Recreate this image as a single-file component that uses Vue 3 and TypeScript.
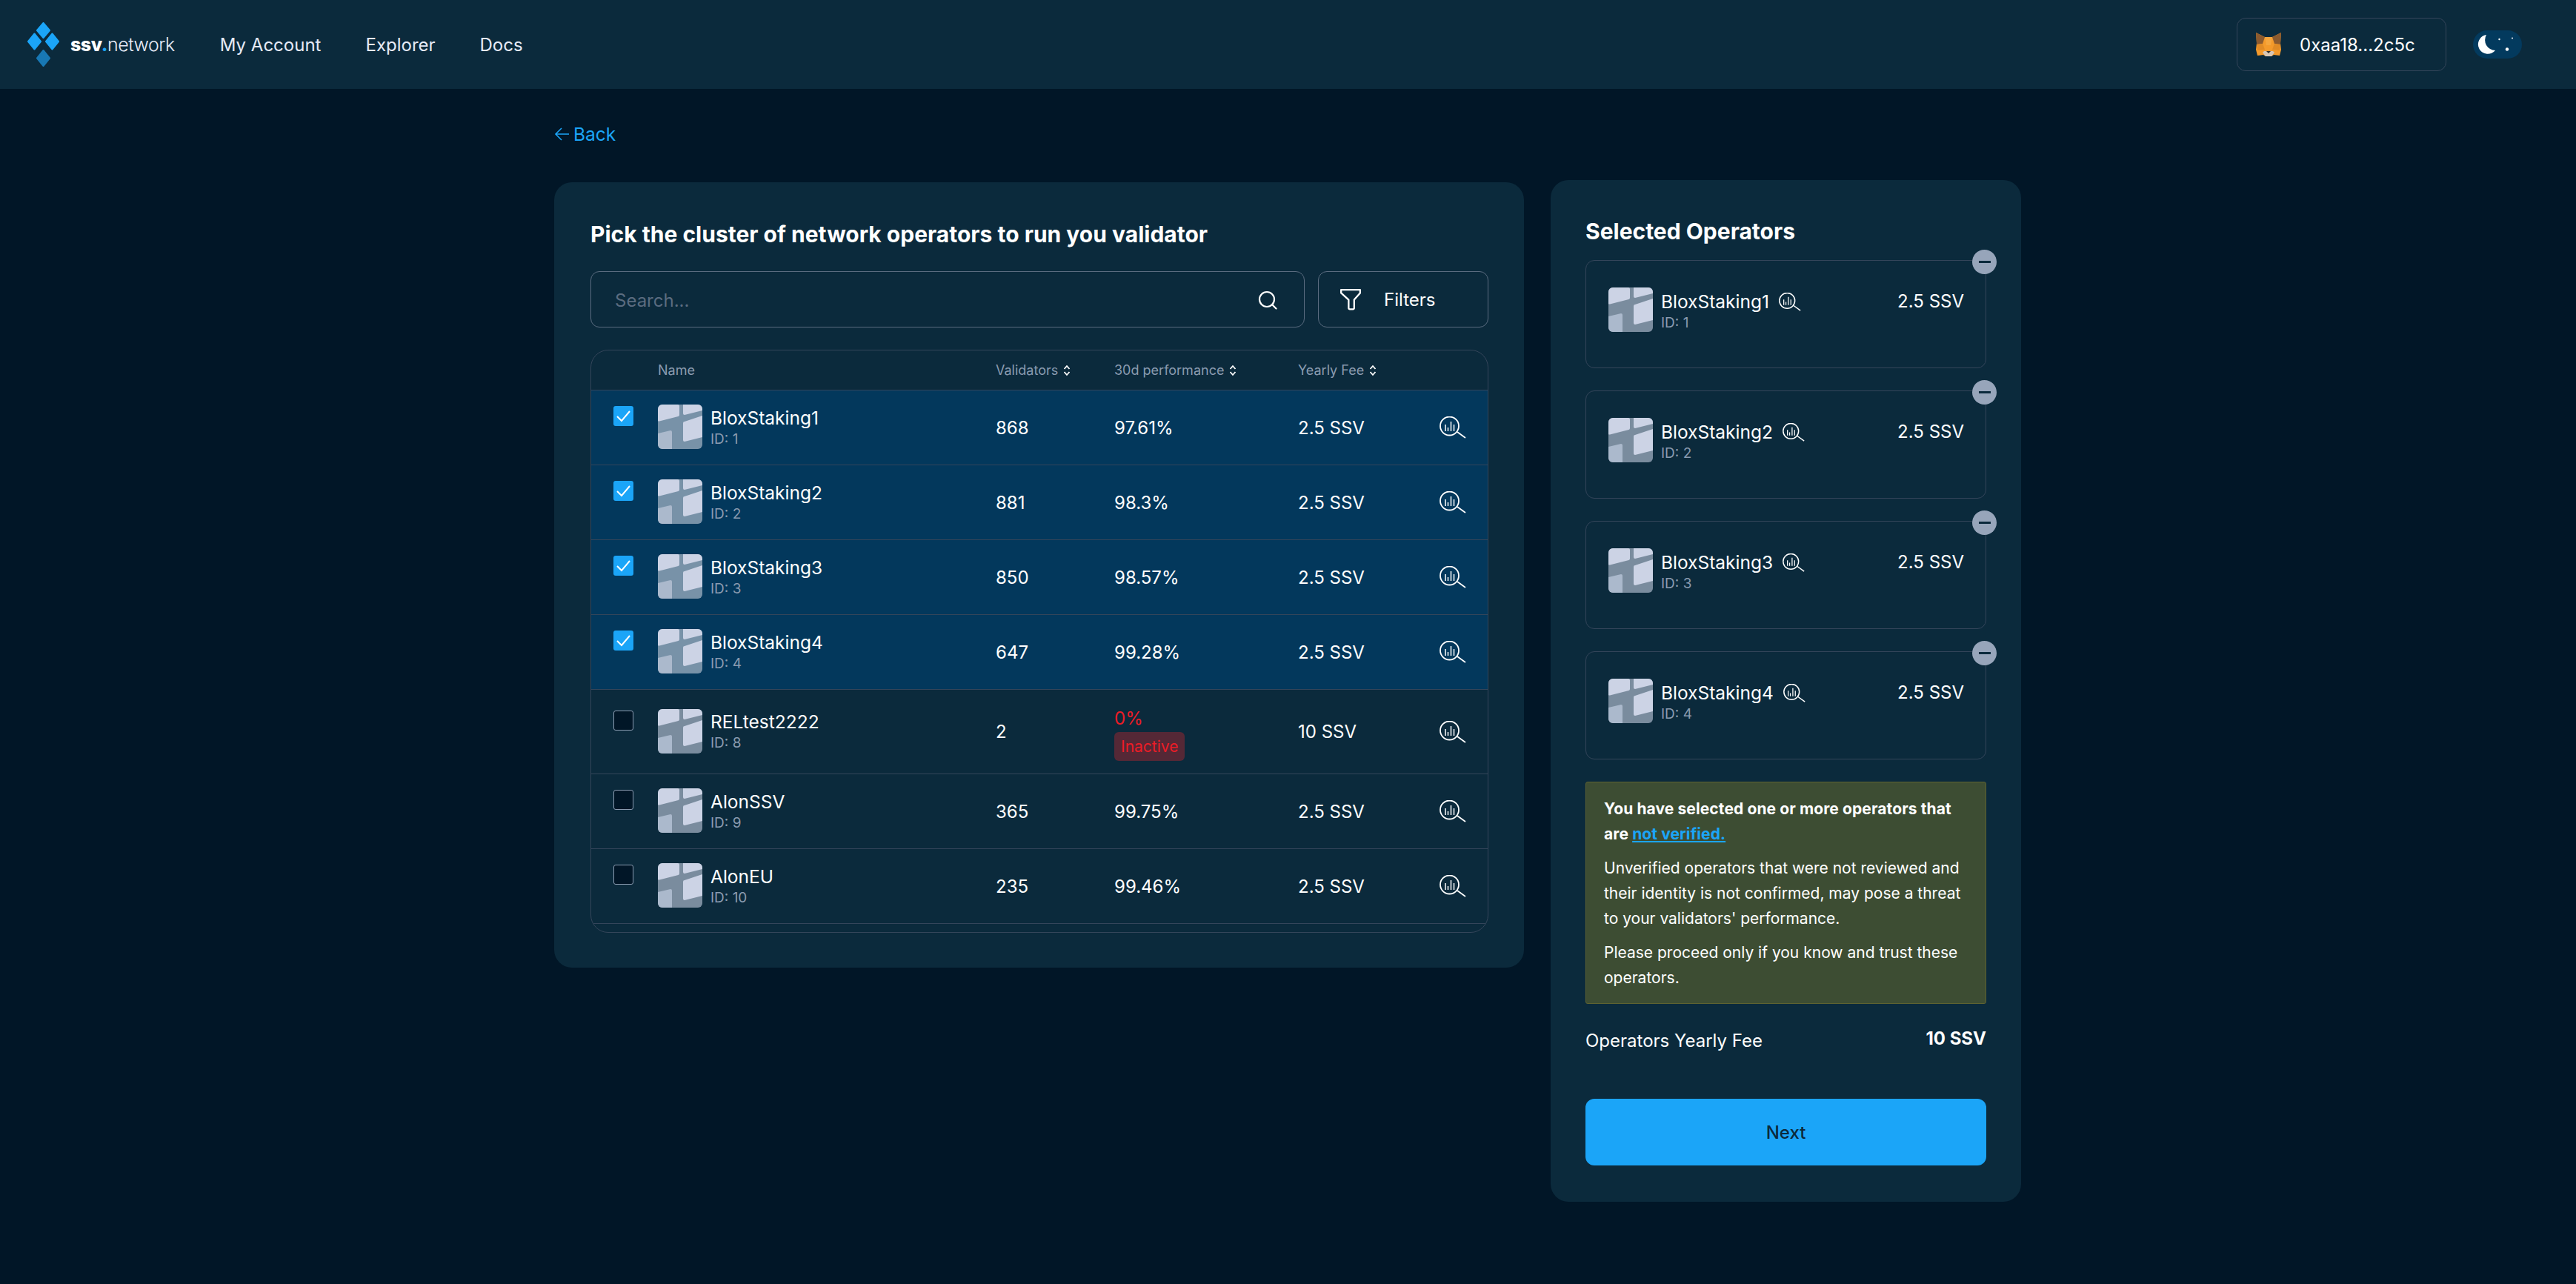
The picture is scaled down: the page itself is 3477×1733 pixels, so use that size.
<script setup lang="ts">
type Operator = {
  name: string;
  id: number;
  validators: number;
  performance: string;
  fee: string;
  selected: boolean;
  inactive?: boolean;
};

const operators: Operator[] = [
  { name: "BloxStaking1", id: 1, validators: 868, performance: "97.61%", fee: "2.5 SSV", selected: true },
  { name: "BloxStaking2", id: 2, validators: 881, performance: "98.3%", fee: "2.5 SSV", selected: true },
  { name: "BloxStaking3", id: 3, validators: 850, performance: "98.57%", fee: "2.5 SSV", selected: true },
  { name: "BloxStaking4", id: 4, validators: 647, performance: "99.28%", fee: "2.5 SSV", selected: true },
  { name: "RELtest2222", id: 8, validators: 2, performance: "0%", fee: "10 SSV", selected: false, inactive: true },
  { name: "AlonSSV", id: 9, validators: 365, performance: "99.75%", fee: "2.5 SSV", selected: false },
  { name: "AlonEU", id: 10, validators: 235, performance: "99.46%", fee: "2.5 SSV", selected: false },
];

const selected = operators.filter((op) => op.selected);
const sortColumns = ["Validators", "30d performance", "Yearly Fee"];

// shared window-shaped operator avatar
const lightPanes = [
  "M6 0H27a2 2 0 0 1 2 2V14a2 2 0 0 1-1.500 2L2 22.500a2 2 0 0 1-2-.5V6a6 6 0 0 1 6-6z",
  "M34 0H54a6 6 0 0 1 6 6v2L36 14a2 2 0 0 1-2-2z",
  "M36 23L60 15V44L36 50a2 2 0 0 1-2-2V25a2 2 0 0 1 2-2z",
];
const dimPane = "M0 39L17 35a2 2 0 0 1 2 2V60H6a6 6 0 0 1-6-6z";

const diamonds = [
  { d: "M21.500 1l8.500 10-8.500 10-8.500-10z", fill: "#1ba5f8" },
  { d: "M9.500 15.500L18 26l-8.500 10.500L1 26z", fill: "#1ba5f8" },
  { d: "M33.500 15.500L42 26l-8.500 10.500L25 26z", fill: "#1ba5f8" },
  { d: "M21.500 38L30 48.500 21.500 59 13 48.500z", fill: "#1878b4" },
];
</script>

<template>
  <div class="page">
    <header class="header">
      <div class="brand">
        <svg class="brand__mark" viewBox="0 0 43 60" aria-hidden="true">
          <path
            v-for="item in diamonds"
            :key="item.d"
            :d="item.d"
            :fill="item.fill"
            :stroke="item.fill"
            stroke-width="2"
            stroke-linejoin="round"
          />
        </svg>
        <span class="brand__name"><b>ssv</b><i>.</i>network</span>
      </div>
      <nav class="nav">
        <a>My Account</a>
        <a>Explorer</a>
        <a>Docs</a>
      </nav>
      <div class="wallet">
        <svg class="wallet__fox" viewBox="0 0 34 32" aria-hidden="true">
          <path d="M0 0l12 6h10L34 0l-1 14 1 9-2 8-8-1-3 2h-8l-3-2-8 1-2-8 1-9z" fill="#f49a2b" />
          <path d="M0 0l12 6-3 9-8 1zM34 0L22 6l3 9 8 1z" fill="#8b5a2f" />
          <path d="M12 6h10l-2 11h-6z" fill="#f6a63d" />
          <path d="M1 16l8-1 3 8-10 1zM33 16l-8-1-3 8 10 1z" fill="#e08a25" />
          <path d="M11 25h12l2 2-4 5h-8l-4-5z" fill="#d8c7b5" />
          <path d="M14 25h6l-3 3z" fill="#2c2c2c" />
        </svg>
        <span>0xaa18...2c5c</span>
      </div>
      <div class="toggle">
        <svg viewBox="0 0 66 38" aria-hidden="true">
          <path d="M18 6a13 13 0 1 0 12 21 14 14 0 0 1-12-21z" fill="#fff" />
          <circle cx="35.500" cy="12" r="1.200" fill="#fff" />
          <circle cx="53" cy="10.500" r="1" fill="#fff" />
          <circle cx="46" cy="25.500" r="2.200" fill="#fff" />
        </svg>
      </div>
    </header>

    <main class="main">
      <a class="back">
        <svg viewBox="0 0 22 22" aria-hidden="true">
          <path d="M20 11H2M10 3l-8 8 8 8" fill="none" stroke="currentColor" stroke-width="1.600" />
        </svg>
        Back
      </a>

      <div class="columns">
        <section class="card card--picker">
          <h1 class="card__title">Pick the cluster of network operators to run you validator</h1>
          <div class="tools">
            <div class="search">
              <span>Search...</span>
              <svg viewBox="0 0 26 26" aria-hidden="true">
                <circle cx="12" cy="12" r="10" fill="none" stroke="#fff" stroke-width="2.200" />
                <path d="M19 19l5.500 5.500" stroke="#fff" stroke-width="2.200" stroke-linecap="round" />
              </svg>
            </div>
            <div class="filters">
              <svg viewBox="0 0 28 28" aria-hidden="true">
                <path
                  d="M2 2h24v4L18.500 14.500V25a1.500 1.500 0 0 1-1.500 1.500h-4a1.500 1.500 0 0 1-1.500-1.500V14.500L2 6z"
                  fill="none"
                  stroke="#fff"
                  stroke-width="2.200"
                  stroke-linejoin="round"
                />
              </svg>
              <span>Filters</span>
            </div>
          </div>

          <div class="table">
            <div class="row row--head">
              <span />
              <span>Name</span>
              <span v-for="col in sortColumns" :key="col" class="sort">
                {{ col }}
                <svg viewBox="0 0 10 16" aria-hidden="true">
                  <path d="M1.500 6L5 2l3.500 4M1.500 10L5 14l3.500-4" fill="none" stroke="#fff" stroke-width="1.800" />
                </svg>
              </span>
              <span />
            </div>

            <div
              v-for="op in operators"
              :key="op.id"
              class="row"
              :class="{ 'row--selected': op.selected, 'row--tall': op.inactive }"
            >
              <span class="check" :class="{ 'check--on': op.selected }">
                <svg v-if="op.selected" viewBox="0 0 27 27" aria-hidden="true">
                  <path d="M5 14l6 6 11-13" fill="none" stroke="#fff" stroke-width="2" />
                </svg>
              </span>
              <div class="operator">
                <svg class="avatar" viewBox="0 0 60 60" aria-hidden="true">
                  <rect class="avatar__bg" width="60" height="60" rx="6" />
                  <path v-for="d in lightPanes" :key="d" :d="d" fill="#ccd3e5" />
                  <path :d="dimPane" fill="#abb9cc" />
                </svg>
                <div>
                  <div class="operator__name">{{ op.name }}</div>
                  <div class="operator__id">ID: {{ op.id }}</div>
                </div>
              </div>
              <span>{{ op.validators }}</span>
              <div v-if="op.inactive" class="perf-off">
                <span>{{ op.performance }}</span>
                <span class="badge">Inactive</span>
              </div>
              <span v-else>{{ op.performance }}</span>
              <span>{{ op.fee }}</span>
              <svg class="lens" viewBox="0 0 36 30" aria-hidden="true">
                <circle cx="13.500" cy="13" r="12.500" fill="none" stroke="#fff" stroke-width="1.800" />
                <path d="M24 21l11 8" stroke="#fff" stroke-width="1.800" />
                <path d="M8 20v-9M11.500 20v-5M15.500 20V7M19.500 20v-9" stroke="#fff" stroke-width="1.500" />
              </svg>
            </div>
            <div class="table__foot" />
          </div>
        </section>

        <aside class="card card--side">
          <h2 class="card__title">Selected Operators</h2>
          <div class="picks">
            <div v-for="op in selected" :key="op.id" class="pick">
              <svg class="avatar" viewBox="0 0 60 60" aria-hidden="true">
                <rect class="avatar__bg" width="60" height="60" rx="6" />
                <path v-for="d in lightPanes" :key="d" :d="d" fill="#ccd3e5" />
                <path :d="dimPane" fill="#abb9cc" />
              </svg>
              <div class="pick__text">
                <div class="pick__name">
                  {{ op.name }}
                  <svg class="lens lens--small" viewBox="0 0 36 30" aria-hidden="true">
                    <circle cx="13.500" cy="13" r="12.500" fill="none" stroke="#fff" stroke-width="1.800" />
                    <path d="M24 21l11 8" stroke="#fff" stroke-width="1.800" />
                    <path d="M8 20v-9M11.500 20v-5M15.500 20V7M19.500 20v-9" stroke="#fff" stroke-width="1.500" />
                  </svg>
                </div>
                <div class="operator__id">ID: {{ op.id }}</div>
              </div>
              <span class="pick__fee">{{ op.fee }}</span>
              <span class="pick__remove"><i /></span>
            </div>
          </div>

          <div class="warning">
            <p class="warning__lead">
              You have selected one or more operators that are <a>not verified.</a>
            </p>
            <p>Unverified operators that were not reviewed and their identity is not confirmed, may pose a threat to your validators' performance.</p>
            <p>Please proceed only if you know and trust these operators.</p>
          </div>

          <div class="total">
            <span class="total__label">Operators Yearly Fee</span>
            <b>10 SSV</b>
          </div>

          <button class="next" type="button">Next</button>
        </aside>
      </div>
    </main>
  </div>
</template>

<style>
html,
body {
  margin: 0;
  background: #011627;
}
</style>

<style scoped>
.page {
  min-height: 1733px;
  background: #011627;
  color: #fff;
  font-family: Inter, "Noto Sans", sans-serif;
}

.header {
  height: 120px;
  box-sizing: border-box;
  display: flex;
  align-items: center;
  padding: 0 73px 0 37px;
  background: #0b2a3c;
}

.brand {
  display: flex;
  align-items: center;
  gap: 15px;
}

.brand__mark {
  width: 43px;
  height: 60px;
}

.brand__name {
  font-size: 25px;
  font-weight: 300;
  letter-spacing: -0.5px;
  color: #e6eaf7;
}

.brand__name b {
  font-weight: 800;
  color: #fff;
}

.brand__name i {
  font-style: normal;
  font-weight: 800;
  color: #1ba5f8;
}

.nav {
  display: flex;
  gap: 60px;
  margin-left: 61px;
  font-size: 24px;
  color: #e6eaf7;
}

.wallet {
  margin-left: auto;
  width: 283px;
  height: 72px;
  box-sizing: border-box;
  display: flex;
  align-items: center;
  gap: 25px;
  padding-left: 25px;
  border: 1px solid #34455a;
  border-radius: 12px;
  font-size: 24px;
}

.wallet__fox {
  width: 34px;
  height: 32px;
}

.toggle {
  width: 66px;
  height: 38px;
  margin-left: 36px;
  border-radius: 19px;
  background: #033a5e;
}

.toggle svg {
  display: block;
  width: 66px;
  height: 38px;
}

.main {
  width: 1980px;
  margin-left: 748px;
}

.back {
  display: flex;
  align-items: center;
  gap: 4px;
  height: 30px;
  margin-top: 46px;
  font-size: 24.500px;
  color: #1ba5f8;
}

.back svg {
  width: 22px;
  height: 22px;
}

.columns {
  display: flex;
  align-items: flex-start;
  gap: 36px;
  margin-top: 47px;
}

.card {
  box-sizing: border-box;
  background: #0b2a3c;
  border-radius: 24px;
}

.card__title {
  margin: 0;
  font-size: 30px;
  line-height: 40px;
  font-weight: 700;
}

.card--picker {
  width: 1309px;
  margin-top: 3px;
  padding: 50px 48px 47px 49px;
}

.tools {
  display: flex;
  gap: 18px;
  margin-top: 30px;
}

.search,
.filters {
  box-sizing: border-box;
  height: 76px;
  display: flex;
  align-items: center;
  border: 1px solid #5b6c80;
  border-radius: 12px;
}

.search {
  flex: 1;
  justify-content: space-between;
  padding: 2px 36px 0 32px;
  font-size: 24px;
  color: #5b6c80;
}

.search svg {
  width: 26px;
  height: 26px;
}

.filters {
  width: 230px;
  gap: 30px;
  padding-left: 28px;
  font-size: 24px;
}

.filters svg {
  width: 30px;
  height: 30px;
}

.table {
  margin-top: 30px;
  border: 1px solid #34455a;
  border-radius: 24px;
  overflow: hidden;
  font-size: 24px;
}

.row {
  display: grid;
  grid-template-columns: 90px 456px 160px 248px 191px 1fr;
  align-items: center;
  height: 101px;
  box-sizing: border-box;
  border-bottom: 1px solid #34455a;
}

.row--head {
  height: 54px;
  font-size: 18px;
  color: #8a9bb0;
}

.row--selected {
  background: #03385c;
}

.row--tall {
  height: 114px;
}

.sort {
  display: flex;
  align-items: center;
  gap: 7px;
}

.sort svg {
  width: 10px;
  height: 16px;
}

.check {
  box-sizing: border-box;
  width: 27px;
  height: 27px;
  margin: 0 0 31px 30px;
  border: 1px solid #8a9bb0;
  border-radius: 3px;
  background: #011627;
}

.check--on {
  border: 0;
  background: #1ba5f8;
}

.check svg {
  display: block;
}

.operator {
  display: flex;
  align-items: center;
  gap: 11px;
  padding-bottom: 2px;
}

.avatar {
  flex: none;
  width: 60px;
  height: 60px;
}

.avatar__bg {
  fill: #7a8c9e;
}

.row--selected .avatar__bg {
  fill: #7892a8;
}

.operator__name {
  font-size: 24.500px;
  line-height: 32px;
  margin-top: 1px;
}

.operator__id {
  font-size: 19px;
  line-height: 26px;
  color: #8a9bb0;
}

.perf-off {
  display: flex;
  flex-direction: column;
  align-items: flex-start;
  gap: 4px;
  margin-top: 6px;
  line-height: 29px;
  color: #ec1c26;
}

.badge {
  padding: 0 9px;
  height: 39px;
  line-height: 39px;
  border-radius: 6px;
  background: #552836;
  font-size: 21px;
}

.lens {
  width: 36px;
  height: 30px;
}

.lens--small {
  width: 30px;
  height: 25px;
  margin-left: 13px;
}

.table__foot {
  height: 11px;
}

.card--side {
  width: 635px;
  padding: 49px 47px 49px 47px;
}

.picks {
  display: flex;
  flex-direction: column;
  gap: 30px;
  margin-top: 19px;
}

.pick {
  position: relative;
  box-sizing: border-box;
  height: 146px;
  display: flex;
  align-items: flex-start;
  gap: 11px;
  padding: 36px 29px 0 30px;
  border: 1px solid #34455a;
  border-radius: 12px;
}

.pick__text {
  flex: 1;
  padding-top: 3px;
}

.pick__name {
  display: flex;
  align-items: center;
  font-size: 24.500px;
  line-height: 32px;
}

.pick__fee {
  padding-top: 3px;
  font-size: 24px;
  line-height: 32px;
}

.pick__remove {
  position: absolute;
  top: -15px;
  right: -15px;
  width: 33px;
  height: 33px;
  display: flex;
  align-items: center;
  justify-content: center;
  border-radius: 50%;
  background: #97a5ba;
}

.pick__remove i {
  display: block;
  width: 16px;
  height: 3px;
  background: #0b2a3c;
}

.warning {
  box-sizing: border-box;
  height: 300px;
  margin-top: 30px;
  padding: 19px 27px 19px 24px;
  background: #3d4d33;
  border: 1px solid #5e6231;
  border-radius: 3px;
  font-size: 21px;
  line-height: 34px;
}

.warning p {
  margin: 0 0 12px;
}

.warning__lead {
  font-weight: 700;
  letter-spacing: 0.1px;
}

.warning a {
  color: #1ba5f8;
  text-decoration: underline;
}

.total {
  display: flex;
  justify-content: space-between;
  align-items: flex-start;
  margin-top: 30px;
  font-size: 24px;
  line-height: 34px;
}

.total__label {
  margin-top: 3px;
}

.next {
  display: block;
  width: 100%;
  height: 90px;
  margin-top: 61px;
  border: 0;
  border-radius: 12px;
  background: #1ba5f8;
  color: #0b2a3c;
  font: 500 24px Inter, sans-serif;
}
</style>
